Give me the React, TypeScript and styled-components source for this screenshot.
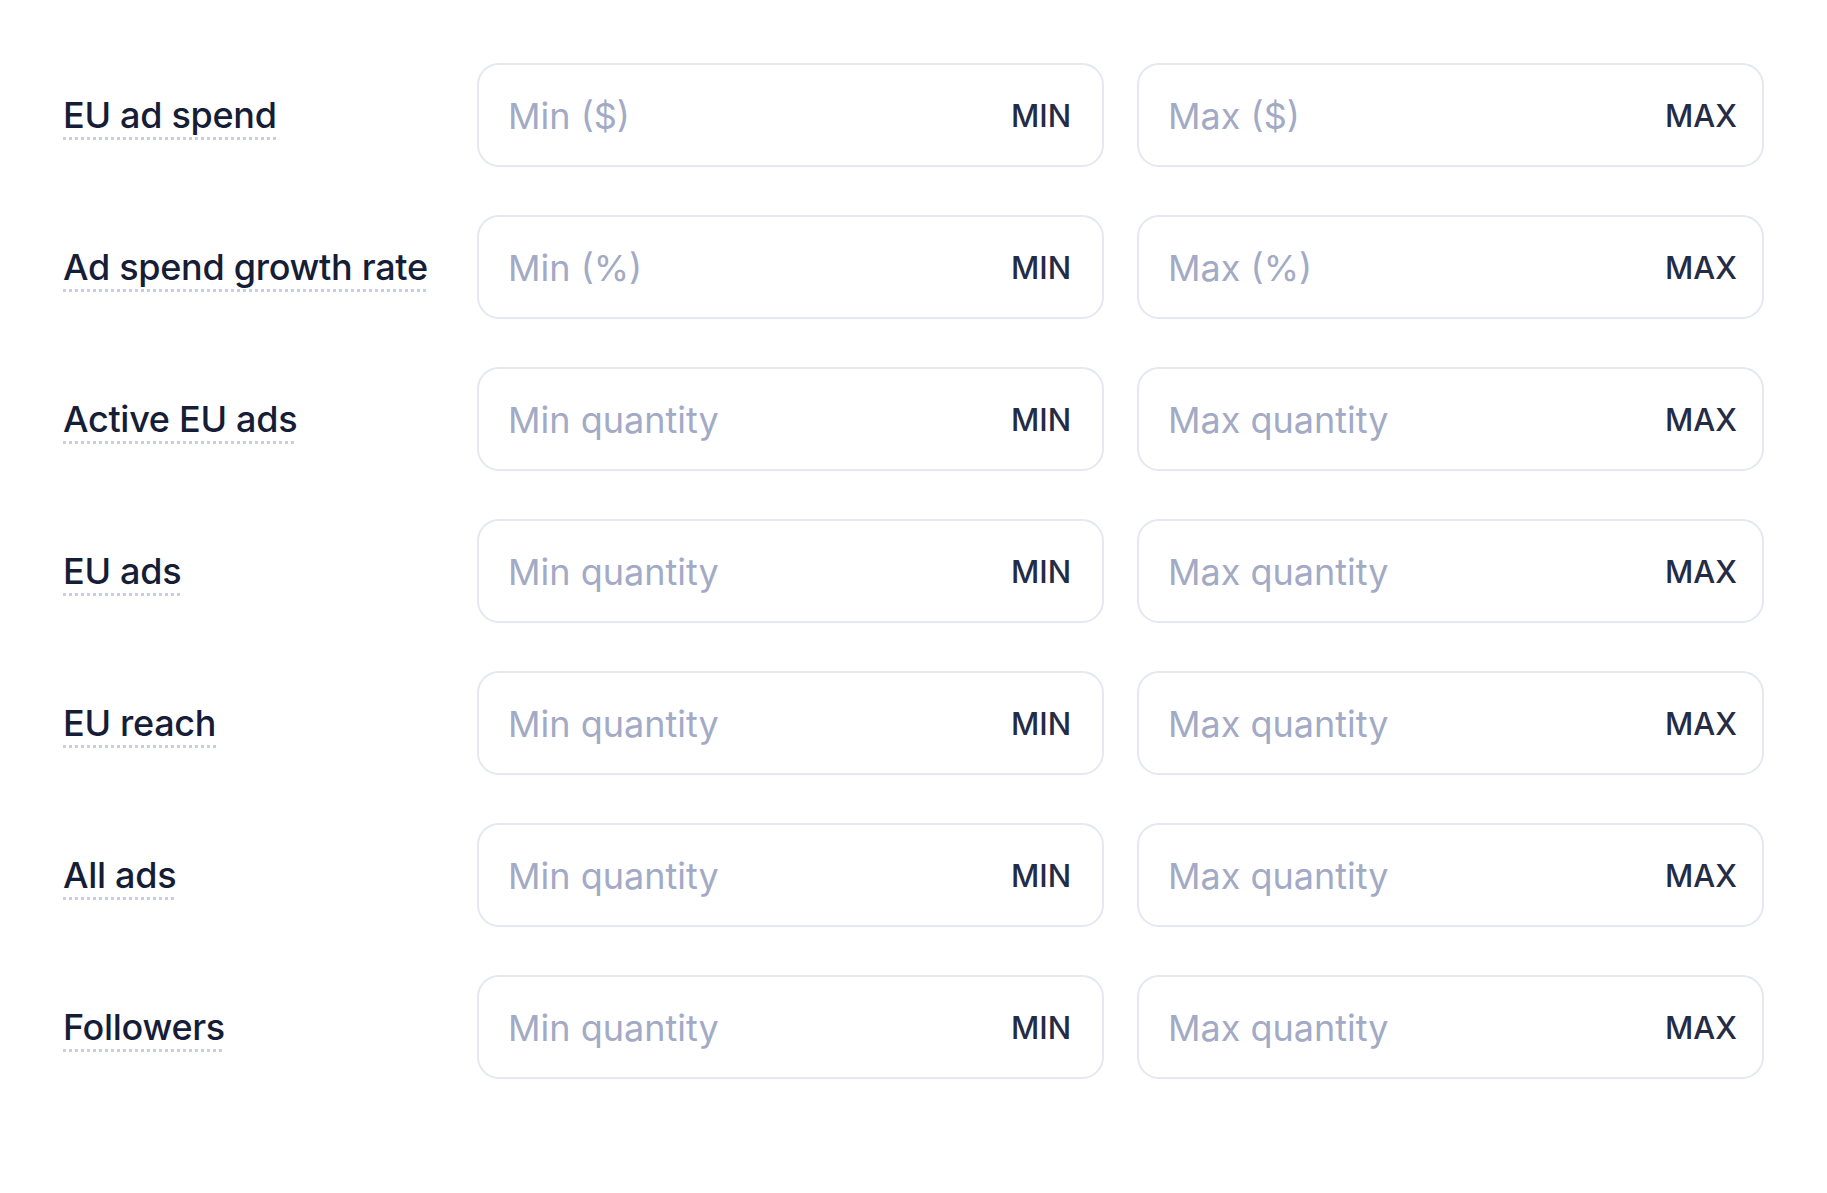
import React from "react";
import styled, { createGlobalStyle } from "styled-components";

const Global = createGlobalStyle`
  html, body { margin: 0; padding: 0; background: #ffffff; }
  body { font-family: Inter, "Noto Sans", sans-serif; }
`;

const Page = styled.div`
  padding: 63px;
  display: grid;
  grid-template-columns: 381px minmax(0, 1fr) minmax(0, 1fr);
  column-gap: 33px;
  row-gap: 48px;
  align-items: center;
`;

const Label = styled.span`
  justify-self: start;
  font-size: 36px;
  font-weight: 500;
  color: #161d36;
  letter-spacing: -0.3px;
  text-decoration: underline dotted #c9cde2;
  text-decoration-thickness: 3px;
  text-underline-offset: 9px;
`;

const Field = styled.label`
  display: flex;
  align-items: center;
  height: 104px;
  box-sizing: border-box;
  border: 2px solid #e5e7f1;
  border-radius: 22px;
  padding: 1px 21px 0 29px;
  background: #fff;
`;

const Input = styled.input`
  flex: 1;
  min-width: 0;
  border: none;
  outline: none;
  background: transparent;
  font-family: inherit;
  font-size: 36px;
  color: #161d36;
  padding: 0;
  &::placeholder { color: #a2aac5; }
`;

const Tag = styled.span`
  width: 80px;
  text-align: center;
  font-size: 31px;
  font-weight: 500;
  color: #242b44;
`;

const rows: { label: string; min: string; max: string }[] = [
  { label: "EU ad spend", min: "Min ($)", max: "Max ($)" },
  { label: "Ad spend growth rate", min: "Min (%)", max: "Max (%)" },
  { label: "Active EU ads", min: "Min quantity", max: "Max quantity" },
  { label: "EU ads", min: "Min quantity", max: "Max quantity" },
  { label: "EU reach", min: "Min quantity", max: "Max quantity" },
  { label: "All ads", min: "Min quantity", max: "Max quantity" },
  { label: "Followers", min: "Min quantity", max: "Max quantity" },
];

export default function App() {
  return (
    <>
      <Global />
      <Page>
        {rows.map((r) => (
          <React.Fragment key={r.label}>
            <Label>{r.label}</Label>
            <Field>
              <Input placeholder={r.min} />
              <Tag>MIN</Tag>
            </Field>
            <Field>
              <Input placeholder={r.max} />
              <Tag>MAX</Tag>
            </Field>
          </React.Fragment>
        ))}
      </Page>
    </>
  );
}
